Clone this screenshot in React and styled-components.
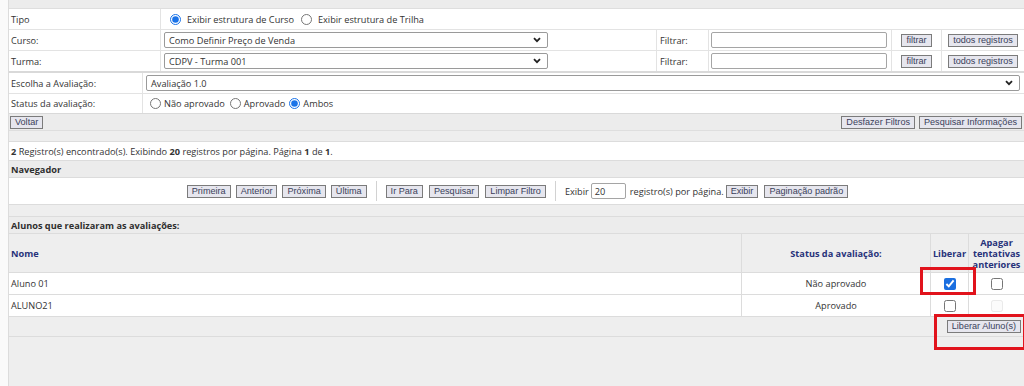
import React from "react";
import styled, { createGlobalStyle } from "styled-components";

const Global = createGlobalStyle`
  html, body { margin: 0; padding: 0; }
  body {
    background: #f9f9f9;
    font-family: "Open Sans", "Noto Sans", sans-serif;
    font-size: 9.2px;
    color: #333;
  }
  #root { width: 1024px; height: 386px; overflow: hidden; }
`;

const Page = styled.div`
  position: relative;
  display: flex;
  height: 386px;
`;

const Gutter = styled.div`
  width: 8px;
  flex: none;
  background: #fafafa;
  border-right: 1px solid #dcdcdc;
`;

const Panel = styled.div`
  flex: 1;
  display: flex;
  flex-direction: column;
  background: #eeeeee;
  overflow: hidden;
`;

const TopBar = styled.div`
  height: 8px;
  flex: none;
  background: #ececec;
  border-bottom: 1px solid #dedede;
`;

const Grid = styled.div`
  display: grid;
  flex: none;
  grid-template-columns: ${(p) => p.$cols};
  grid-template-rows: ${(p) => p.$rows || "20px 20px 20px"};
  gap: 1px;
  background: #e3e3e3;
  border-top: ${(p) => (p.$topLine ? "1px solid #d9d9d9" : "none")};
  border-bottom: 1px solid #d9d9d9;
`;

const Cell = styled.div`
  background: #fff;
  display: flex;
  align-items: center;
  padding: 0 ${(p) => p.$padR ?? 3}px 0 ${(p) => p.$padL ?? 3}px;
  grid-column: span ${(p) => p.$span || 1};
  justify-content: ${(p) => p.$justify || "flex-start"};
  white-space: nowrap;
`;

const Select = styled.div`
  box-sizing: border-box;
  width: ${(p) => p.$w || "100%"};
  height: 16px;
  border: 1px solid #9a9a9a;
  border-radius: 2px;
  background: #fff;
  display: flex;
  align-items: center;
  justify-content: space-between;
  padding: 0 6px 0 4px;
  color: #333;
`;

const TextBox = styled.div`
  box-sizing: border-box;
  width: ${(p) => p.$w}px;
  height: 16px;
  border: 1px solid #a5a5a5;
  border-radius: 2px;
  background: #fff;
  display: flex;
  align-items: center;
  padding: 0 3px;
  color: #333;
`;

const Btn = styled.button`
  box-sizing: border-box;
  height: 13px;
  padding: 0 4px;
  margin: 0;
  border: 1px solid #7b7b7b;
  background: #e6e6ee;
  color: #3a3f5a;
  font-family: "Liberation Sans", Arial, sans-serif;
  font-size: 9.1px;
  line-height: 11px;
  white-space: nowrap;
  cursor: pointer;
`;

const Radio = styled.input.attrs({ type: "radio", readOnly: true })`
  width: 11px;
  height: 11px;
  margin: 0 ${(p) => p.$mr ?? 4}px 0 0;
  accent-color: #1a73e8;
`;

const Check = styled.input.attrs({ type: "checkbox", readOnly: true })`
  width: 12px;
  height: 12px;
  margin: 0;
  accent-color: #1b6fe0;
  opacity: ${(p) => (p.disabled ? 0.45 : 1)};
`;

const RadioLabel = styled.span`
  margin-right: ${(p) => p.$mr ?? 6}px;
`;

const ActionBar = styled.div`
  height: 16px;
  flex: none;
  display: flex;
  align-items: center;
  justify-content: space-between;
  padding: 0 2px 0 1px;
  background: #ececec;
  border-bottom: 1px solid #dedede;
`;

const BtnGroup = styled.div`
  display: flex;
  align-items: center;
  gap: ${(p) => p.$gap ?? 4}px;
`;

const Spacer = styled.div`
  height: ${(p) => p.$h}px;
  flex: none;
  border-top: ${(p) => (p.$line ? "1px solid #dcdcdc" : "none")};
`;

const Bar = styled.div`
  height: ${(p) => p.$h}px;
  flex: none;
  display: flex;
  align-items: center;
  justify-content: ${(p) => p.$justify || "flex-start"};
  padding-left: 2px;
  background: ${(p) => (p.$white ? "#fff" : "#ececec")};
  border-top: 1px solid #dcdcdc;
  font-weight: ${(p) => (p.$bold ? 700 : 400)};
  color: ${(p) => (p.$bold ? "#2f2f2f" : "#333")};
`;

const Label = styled.span`
  margin: 0 ${(p) => p.$mr ?? 0}px 0 ${(p) => p.$ml ?? 0}px;
`;

const Sep = styled.div`
  width: 1px;
  height: 20px;
  background: #d2d2d2;
  margin: 0 9px;
`;

const Table = styled.div`
  display: grid;
  flex: none;
  grid-template-columns: 732px 188px 37px 1fr;
  grid-template-rows: 38px 21px 21px 19px;
  gap: 1px;
  background: #dcdcdc;
  border-top: 1px solid #dcdcdc;
  border-bottom: 1px solid #dcdcdc;
`;

const Th = styled.div`
  background: #eeeeee;
  display: flex;
  align-items: center;
  justify-content: ${(p) => p.$justify || "center"};
  text-align: center;
  padding-left: ${(p) => p.$pl || 0}px;
  color: #27327a;
  font-weight: 700;
  line-height: 11px;
`;

const Td = styled.div`
  background: #fff;
  display: flex;
  align-items: center;
  justify-content: ${(p) => p.$justify || "center"};
  padding-left: ${(p) => p.$pl || 0}px;
`;

const Footer = styled.div`
  grid-column: 1 / -1;
  background: #eeeeee;
  display: flex;
  align-items: center;
  justify-content: flex-end;
  padding-right: 3px;
`;

const Highlight = styled.div`
  position: absolute;
  left: ${(p) => p.$x}px;
  top: ${(p) => p.$y}px;
  width: ${(p) => p.$w}px;
  height: ${(p) => p.$h}px;
  box-sizing: border-box;
  border: 3px solid #e1131c;
  pointer-events: none;
`;

const Chevron = () => (
  <svg width="8" height="6" viewBox="0 0 8 6">
    <path d="M1 1.2 L4 4.2 L7 1.2" fill="none" stroke="#222" strokeWidth="1.8" />
  </svg>
);

export default function App() {
  return (
    <>
      <Global />
      <Page>
        <Gutter />
        <Panel>
          <TopBar />
          <Grid $cols="151px 495px 51px 182px 49px 1fr">
            <Cell $padL={2}>Tipo</Cell>
            <Cell $span={5} $padL={9}>
              <Radio defaultChecked name="tipo" $mr={6} />
              <RadioLabel $mr={7}>Exibir estrutura de Curso</RadioLabel>
              <Radio name="tipo" $mr={6} />
              <RadioLabel>Exibir estrutura de Trilha</RadioLabel>
            </Cell>

            <Cell $padL={2}>Curso:</Cell>
            <Cell>
              <Select $w="384px">
                <span>Como Definir Preço de Venda</span>
                <Chevron />
              </Select>
            </Cell>
            <Cell>Filtrar:</Cell>
            <Cell $padL={2}>
              <TextBox $w={176} />
            </Cell>
            <Cell $justify="center" $padL={0} $padR={0}>
              <Btn>filtrar</Btn>
            </Cell>
            <Cell $justify="center" $padL={0} $padR={0}>
              <Btn>todos registros</Btn>
            </Cell>

            <Cell $padL={2}>Turma:</Cell>
            <Cell>
              <Select $w="384px">
                <span>CDPV - Turma 001</span>
                <Chevron />
              </Select>
            </Cell>
            <Cell>Filtrar:</Cell>
            <Cell $padL={2}>
              <TextBox $w={176} />
            </Cell>
            <Cell $justify="center" $padL={0} $padR={0}>
              <Btn>filtrar</Btn>
            </Cell>
            <Cell $justify="center" $padL={0} $padR={0}>
              <Btn>todos registros</Btn>
            </Cell>
          </Grid>

          <Grid $cols="133px 1fr" $rows="20px 19px" $topLine>
            <Cell $padL={2}>Escolha a Avaliação:</Cell>
            <Cell $padL={3} $padR={4}>
              <Select>
                <span>Avaliação 1.0</span>
                <Chevron />
              </Select>
            </Cell>
            <Cell $padL={2}>Status da avaliação:</Cell>
            <Cell $padL={7}>
              <Radio name="st" $mr={3} />
              <RadioLabel $mr={5}>Não aprovado</RadioLabel>
              <Radio name="st" $mr={3} />
              <RadioLabel $mr={4}>Aprovado</RadioLabel>
              <Radio name="st" defaultChecked $mr={3} />
              <RadioLabel>Ambos</RadioLabel>
            </Cell>
          </Grid>

          <ActionBar>
            <Btn>Voltar</Btn>
            <BtnGroup $gap={4}>
              <Btn>Desfazer Filtros</Btn>
              <Btn>Pesquisar Informações</Btn>
            </BtnGroup>
          </ActionBar>

          <Spacer $h={10} />

          <Bar $h={18} $white>
            <span>
              <b>2</b> Registro(s) encontrado(s). Exibindo <b>20</b> registros por página. Página <b>1</b> de <b>1</b>.
            </span>
          </Bar>
          <Bar $h={16} $bold>Navegador</Bar>
          <Bar $h={26} $white $justify="center">
            <BtnGroup $gap={5}>
              <Btn>Primeira</Btn>
              <Btn>Anterior</Btn>
              <Btn>Próxima</Btn>
              <Btn>Última</Btn>
            </BtnGroup>
            <Sep />
            <BtnGroup $gap={6}>
              <Btn>Ir Para</Btn>
              <Btn>Pesquisar</Btn>
              <Btn>Limpar Filtro</Btn>
            </BtnGroup>
            <Sep />
            <BtnGroup $gap={0}>
              <Label $mr={2}>Exibir</Label>
              <TextBox $w={35}>20</TextBox>
              <Label $ml={4} $mr={2}>registro(s) por página.</Label>
              <Btn>Exibir</Btn>
              <Label $mr={6} />
              <Btn>Paginação padrão</Btn>
            </BtnGroup>
          </Bar>
          <Spacer $h={11} $line />
          <Bar $h={16} $bold>Alunos que realizaram as avaliações:</Bar>

          <Table>
            <Th $justify="flex-start" $pl={2}>Nome</Th>
            <Th>Status da avaliação:</Th>
            <Th>Liberar</Th>
            <Th>
              Apagar
              <br />
              tentativas
              <br />
              anteriores
            </Th>

            <Td $justify="flex-start" $pl={2}>Aluno 01</Td>
            <Td>Não aprovado</Td>
            <Td><Check defaultChecked /></Td>
            <Td><Check /></Td>

            <Td $justify="flex-start" $pl={2}>ALUNO21</Td>
            <Td>Aprovado</Td>
            <Td><Check /></Td>
            <Td><Check disabled /></Td>

            <Footer>
              <Btn>Liberar Aluno(s)</Btn>
            </Footer>
          </Table>
        </Panel>
        <Highlight $x={920} $y={267} $w={56} $h={28} />
        <Highlight $x={934} $y={314} $w={92} $h={36} />
      </Page>
    </>
  );
}
